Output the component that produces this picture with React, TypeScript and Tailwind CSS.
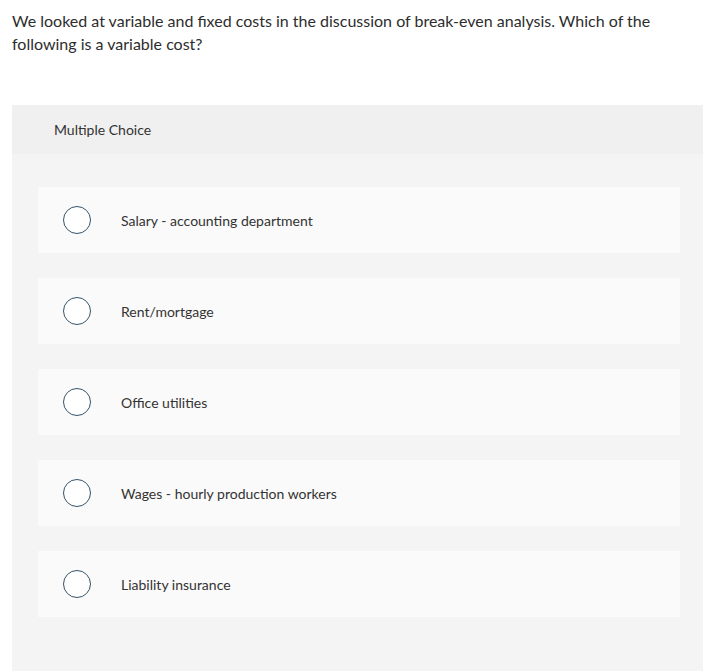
const options = [
  'Salary - accounting department',
  'Rent/mortgage',
  'Office utilities',
  'Wages - hourly production workers',
  'Liability insurance',
];

export default function App() {
  return (
    <div className="h-[671px] w-[703px] overflow-hidden bg-white text-[#333] font-['Lato','Open_Sans',sans-serif]">
      <p className="px-3 pt-[9px] max-w-[680px] text-[16px] leading-[23px] text-[#2d2d2d]">
        We looked at variable and fixed costs in the discussion of break-even analysis. Which of the
        following is a variable cost?
      </p>

      <div className="ml-3 mt-[50px] bg-[#f4f4f4] h-[600px]">
        <div className="h-[49px] bg-[#f0f0f0] flex items-center pl-[42px] text-[14px] text-[#333]">
          Multiple Choice
        </div>
        <div className="flex flex-col gap-[25px] pt-[33px] pl-[26px] pr-[23px]">
          {options.map((o) => (
            <label
              key={o}
              className="h-[66px] bg-[#fafafa] flex items-center cursor-pointer"
            >
              <span className="ml-[25px] w-[28px] h-[28px] rounded-full border-[1.5px] border-[#34546a] bg-white shrink-0" />
              <span className="ml-[30px] text-[14px] text-[#333]">{o}</span>
            </label>
          ))}
        </div>
      </div>
    </div>
  );
}
